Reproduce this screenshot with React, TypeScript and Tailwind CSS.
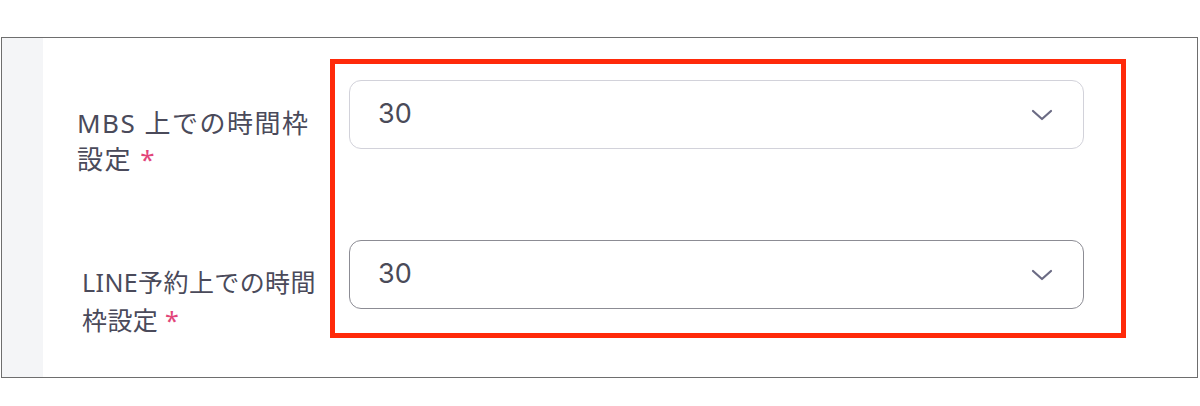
import React from 'react';

const labelFont = { fontFamily: '"Noto Sans", "Noto Sans CJK JP", sans-serif' };

function Chevron() {
  return (
    <svg width="22" height="12" viewBox="0 0 22 12" fill="none" className="shrink-0">
      <path d="M2 2L11 10L20 2" stroke="#6b6b84" strokeWidth="2.2" strokeLinecap="round" strokeLinejoin="round" />
    </svg>
  );
}

function SelectBox({ value, borderClass }: { value: string; borderClass: string }) {
  return (
    <div className={`h-[69px] w-[735px] rounded-[12px] border bg-white flex items-center justify-between pl-[28px] pr-[30px] ${borderClass}`}>
      <span className="text-[27px] text-[#4a4a58]" style={{ fontFamily: 'Inter, "Liberation Sans", sans-serif' }}>
        {value}
      </span>
      <Chevron />
    </div>
  );
}

export default function App() {
  return (
    <div className="h-[406px] w-[1200px] bg-white pt-[37px] pl-[1px] pr-[2px]">
      <div className="flex h-[341px] border border-[#6e6e6e]">
        {/* left strip */}
        <div className="w-[41px] bg-[#f4f5f7]" />

        {/* labels */}
        <div className="w-[287px] flex flex-col text-[#4a4a5a]" style={labelFont}>
          <div className="mt-[67px] pl-[34px] text-[26px] leading-[36px] tracking-[1.5px] whitespace-nowrap">
            MBS 上での時間枠
            <br />
            設定 <span className="text-[#e2457a]">*</span>
          </div>
          <div className="mt-[86px] pl-[39px] text-[25px] leading-[38px] tracking-[0.4px] whitespace-nowrap">
            LINE予約上での時間
            <br />
            枠設定 <span className="text-[#e2457a]">*</span>
          </div>
        </div>

        {/* highlighted selects */}
        <div className="mt-[21px] h-[279px] w-[796px] border-[5px] border-[#ff2a0a] pt-[16px] pl-[14px] flex flex-col gap-[91px]">
          <SelectBox value="30" borderClass="border-[#d2d2da]" />
          <SelectBox value="30" borderClass="border-[#8c8c94]" />
        </div>
      </div>
    </div>
  );
}
